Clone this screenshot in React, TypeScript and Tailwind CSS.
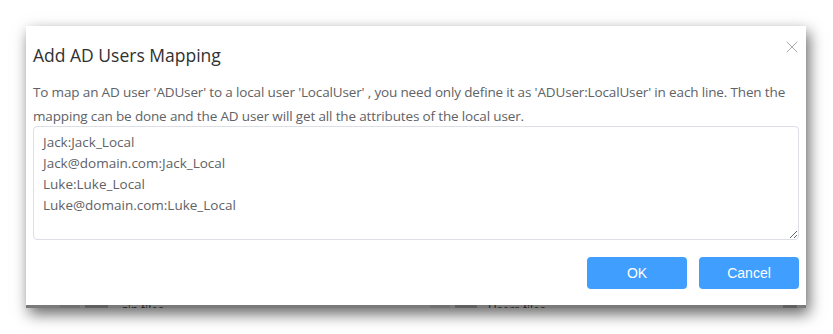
import { X } from 'lucide-react';

const MAPPINGS = [
  'Jack:Jack_Local',
  'Jack@domain.com:Jack_Local',
  'Luke:Luke_Local',
  'Luke@domain.com:Luke_Local',
].join('\n');

export default function App() {
  return (
    <div className="min-h-[334px] w-[833px] bg-white pl-[26px] pt-[26px]" style={{ fontFamily: '"Open Sans", "Noto Sans", sans-serif' }}>
      <div className="w-[780px] shadow-[3px_6px_14px_rgba(0,0,0,0.6)]">
        {/* Dialog */}
        <div className="relative flex h-[279px] flex-col bg-white px-[7px]">
          <h2 className="mt-[17px] text-[17.5px] leading-[24px] text-[#303133]">Add AD Users Mapping</h2>
          <button className="absolute right-[4px] top-[11px] text-[#a0a3a8]" aria-label="Close">
            <X size={20} strokeWidth={1.1} />
          </button>

          <p className="mt-[13px] text-[13.5px] leading-[24px] tracking-[-0.15px] text-[#606266]">
            To map an AD user 'ADUser' to a local user 'LocalUser' , you need only define it as 'ADUser:LocalUser' in each line. Then the mapping can be done and the AD user will get all the attributes of the local user.
          </p>

          <textarea
            className="-mt-[2px] h-[114px] w-full resize-y rounded-[4px] border border-[#dcdfe6] px-[9px] py-[5px] text-[13.5px] leading-[21px] text-[#606266] outline-none"
            defaultValue={MAPPINGS}
          />

          <div className="mt-[17px] flex justify-end gap-[12px]">
            <button className="h-[32px] w-[100px] rounded-[4px] bg-[#409eff] text-[14px] text-white" style={{ fontFamily: '"Liberation Sans", Arial, sans-serif' }}>
              OK
            </button>
            <button className="h-[32px] w-[100px] rounded-[4px] bg-[#409eff] text-[14px] text-white" style={{ fontFamily: '"Liberation Sans", Arial, sans-serif' }}>
              Cancel
            </button>
          </div>
        </div>

        {/* Page behind the modal overlay, clipped */}
        <div className="flex h-[3px] overflow-hidden bg-[#7a7a7a] text-[12px] leading-[12px] text-[#222]">
          <span className="ml-[34px] h-[3px] w-[20px] shrink-0 bg-[#707070]" />
          <span className="ml-[5px] h-[3px] w-[23px] shrink-0 bg-[#5f5f5f]" />
          <span className="-mt-[1px] ml-[14px] w-[60px] shrink-0 whitespace-nowrap">zip files</span>
          <span className="ml-[248px] h-[3px] w-[20px] shrink-0 bg-[#707070]" />
          <span className="ml-[5px] h-[3px] w-[22px] shrink-0 bg-[#5f5f5f]" />
          <span className="-mt-[1px] ml-[11px] w-[70px] shrink-0 whitespace-nowrap">Users files</span>
          <span className="ml-auto mr-[9px] h-[3px] w-[14px] shrink-0 bg-[#5f5f5f]" />
        </div>
      </div>
    </div>
  );
}
